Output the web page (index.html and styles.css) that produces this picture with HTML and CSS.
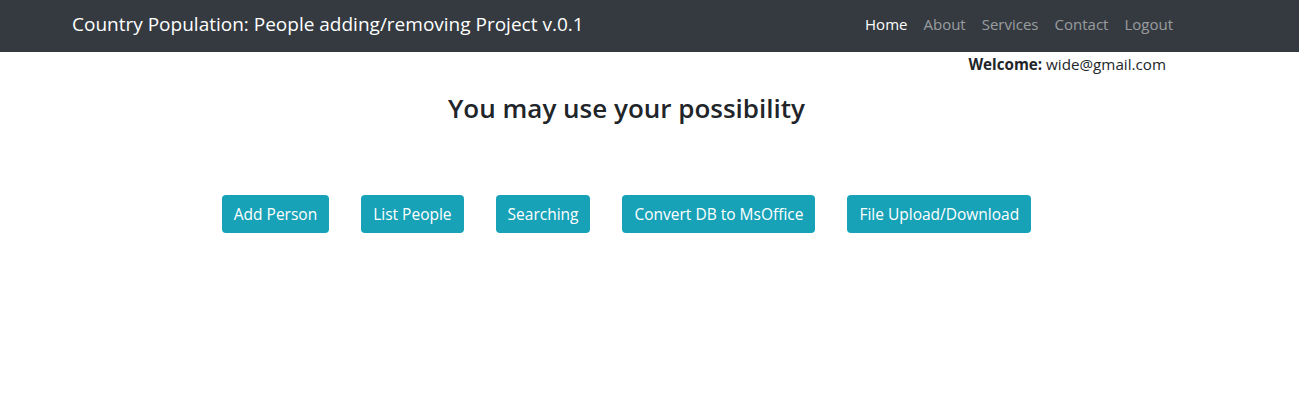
FILE: index.html
```html
<!DOCTYPE html>
<html lang="en">
<head>
    <meta charset="UTF-8">
    <meta name="viewport" content="width=device-width, initial-scale=1.0">
    <title>Country Population</title>
    <link rel="stylesheet" href="styles.css">
</head>
<body>
    <nav class="navbar">
        <div class="container nav-inner">
            <a class="brand" href="#">Country Population: People adding/removing Project v.0.1</a>
            <ul class="nav-links">
                <li><a class="active" href="#">Home</a></li>
                <li><a href="#">About</a></li>
                <li><a href="#">Services</a></li>
                <li><a href="#">Contact</a></li>
                <li><a href="#">Logout</a></li>
            </ul>
        </div>
    </nav>

    <div class="container">
        <p class="welcome"><b>Welcome:</b> wide@gmail.com</p>
        <h3 class="title">You may use your possibility</h3>

        <div class="actions">
            <a class="btn" href="#">Add Person</a>
            <a class="btn" href="#">List People</a>
            <a class="btn" href="#">Searching</a>
            <a class="btn" href="#">Convert DB to MsOffice</a>
            <a class="btn" href="#">File Upload/Download</a>
        </div>
    </div>
</body>
</html>
```

FILE: styles.css
```css
body {
    margin: 0;
    font-family: "Open Sans", "Noto Sans", sans-serif;
    font-size: 15.5px;
    color: #212529;
    background-color: #fff;
}

a {
    text-decoration: none;
}

.container {
    width: 1109px;
    margin-left: 72px;
}

.navbar {
    background-color: #343a40;
    height: 52px;
}

.nav-inner {
    display: flex;
    justify-content: space-between;
    align-items: center;
    height: 100%;
    box-sizing: border-box;
    padding-bottom: 5px;
}

.brand {
    color: #fff;
    font-size: 19px;
}

.nav-links {
    display: flex;
    list-style: none;
    margin: 0;
    padding: 0;
    font-size: 15px;
}

.nav-links a {
    display: block;
    padding: 8px;
    color: rgba(255, 255, 255, .5);
}

.nav-links a.active {
    color: #fff;
}

.welcome {
    margin: 1px 15px 0 0;
    text-align: right;
    line-height: 22px;
    font-size: 15.2px;
}

.title {
    margin: 15px 0 0;
    text-align: center;
    font-size: 26px;
    font-weight: 600;
}

.actions {
    display: flex;
    justify-content: center;
    gap: 32px;
    margin-top: 69px;
}

.btn {
    display: inline-block;
    padding: 0 12px;
    height: 38px;
    line-height: 38px;
    color: #fff;
    background-color: #17a2b8;
    border-radius: 4px;
}
```
